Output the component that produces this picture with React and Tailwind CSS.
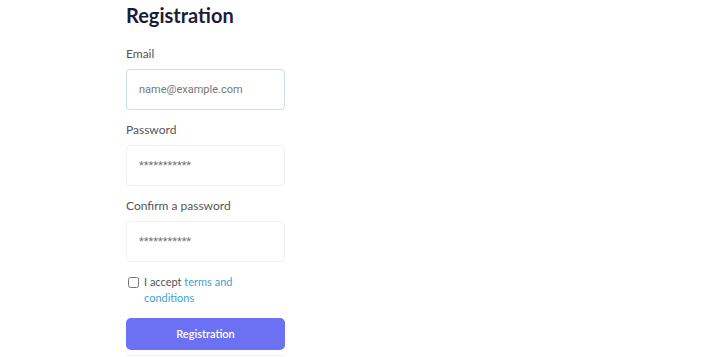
const Field = ({ label, type, placeholder, active, className }) => (
  <div className={className}>
    <label className="block text-[12px] leading-[16px] text-[#555]">{label}</label>
    <input
      type={type}
      placeholder={placeholder}
      className={`mt-[7px] block h-[41px] w-full rounded-[4px] border bg-white px-3 text-[11px] text-gray-600 outline-none placeholder:text-[#777] ${
        active ? 'border-[#c7dcec]' : 'border-[#f0f0f0]'
      }`}
      style={{ fontFamily: 'Roboto, sans-serif' }}
    />
  </div>
);

const App = () => {
  return (
    <div className="min-h-[357px] w-[720px] bg-white" style={{ fontFamily: 'Lato, "Noto Sans", sans-serif' }}>
      <div className="w-[285px] pl-[126px] pt-[1px]">
        <h1 className="text-[20px] font-bold leading-[28px] text-[#1b1c3a]">Registration</h1>

        <Field className="mt-[17px]" label="Email" type="email" placeholder="name@example.com" active />
        <Field className="mt-[12px]" label="Password" type="password" placeholder="***********" />
        <Field className="mt-[12px]" label="Confirm a password" type="password" placeholder="***********" />

        <div className="mt-[12px] flex items-start gap-[5px] text-[11px] leading-[16px] text-[#555]">
          <input type="checkbox" className="ml-[2px] mt-[3px] h-[11px] w-[11px] shrink-0 rounded-[2px] border border-gray-500" />
          <p className="w-[100px]">
            I accept <a href="#" className="text-[#3ea4cf]">terms and conditions</a>
          </p>
        </div>

        <button className="mt-[12px] h-[32px] w-full rounded-[5px] bg-[#6c71f3] text-[11px] font-semibold text-white">
          Registration
        </button>
        <div className="mt-[5px] h-px w-full bg-[#eef3fb]" />
      </div>
    </div>
  );
};

export default App;
